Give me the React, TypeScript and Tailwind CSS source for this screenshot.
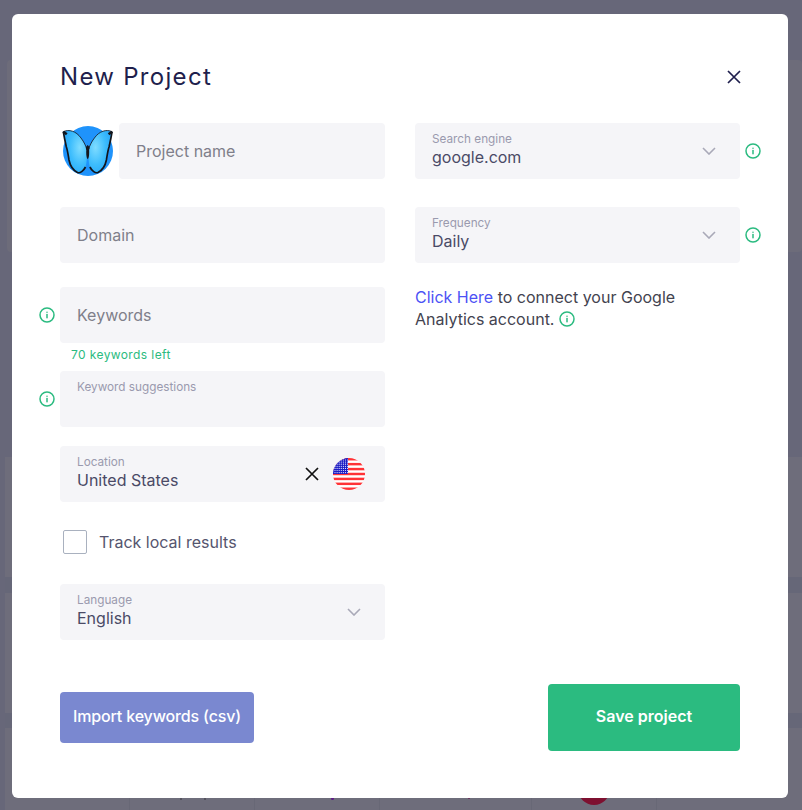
function InfoIcon() {
  return (
    <svg width="16" height="16" viewBox="0 0 16 16" fill="none" stroke="#2bbb80" strokeWidth="1.5" strokeLinecap="round">
      <circle cx="8" cy="8" r="7" />
      <path d="M8 7.6v3.2" />
      <path d="M8 5.2v.1" />
    </svg>
  );
}

function Chevron() {
  return (
    <svg width="14" height="8" viewBox="0 0 14 8" fill="none" stroke="#a9a9b8" strokeWidth="1.6">
      <path d="M1 1l6 6 6-6" />
    </svg>
  );
}

function Cross({ color, size }: { color: string; size: number }) {
  return (
    <svg width={size} height={size} viewBox="0 0 14 14" fill="none" stroke={color} strokeWidth="1.7">
      <path d="M1 1l12 12M13 1L1 13" />
    </svg>
  );
}

// blue morpho logo
const wing =
  "M3.3 8.7C9 6 16 8 21 15C24 19 26 23 27 27C27 34 27 39 25.5 44C23.5 48 20 50.5 17.5 49.5C12.5 47 10 42 9 37C8 31 7.5 27 6.3 23.7C5 18 4 13 3.3 8.7Z";
const outerEdge = "M3.3 8.7C4 13 5 18 6.3 23.7C7.5 27 8 31 9 37C10 42 12.5 47 17.5 49.5C20 50.5 23.5 48 25.5 44";
const upperEdge = "M3.3 8.7C9 6 16 8 21 15C24 19 26 23 27 27";

function WingHalf() {
  return (
    <>
      <path d={wing} fill="url(#wingFill)" />
      <path d={outerEdge} fill="none" stroke="#12161d" strokeWidth="1.7" />
      <path d={upperEdge} fill="none" stroke="#1a2230" strokeWidth="0.9" />
      <path d="M3.3 8.7l3.5 2.6" fill="none" stroke="#12161d" strokeWidth="2.6" />
    </>
  );
}

function Butterfly() {
  return (
    <svg width="56" height="56" viewBox="0 0 56 56" className="shrink-0">
      <defs>
        <radialGradient id="wingFill" cx="70%" cy="40%" r="75%">
          <stop offset="0%" stopColor="#7fdcff" />
          <stop offset="55%" stopColor="#3dbdfd" />
          <stop offset="100%" stopColor="#25a5f8" />
        </radialGradient>
      </defs>
      <circle cx="28" cy="28" r="25" fill="#1f93fb" />
      <WingHalf />
      <g transform="translate(55.4) scale(-1 1)">
        <WingHalf />
      </g>
      <ellipse cx="27.7" cy="29" rx="1.5" ry="7" fill="#15171c" />
      <circle cx="27.7" cy="25" r="1.9" fill="#15171c" />
    </svg>
  );
}

function UsFlag() {
  const stripes = [0, 2, 4, 6, 8, 10, 12];
  const dots = [];
  for (let r = 0; r < 7; r++) {
    for (let c = 0; c < 7; c++) {
      dots.push(<circle key={`${r}-${c}`} cx={2 + c * 2.1} cy={2 + r * 2.1} r="0.6" fill="#e4e6ff" />);
    }
  }
  return (
    <svg width="32" height="32" viewBox="0 0 32 32" className="shrink-0">
      <defs>
        <clipPath id="flagClip">
          <circle cx="16" cy="16" r="16" />
        </clipPath>
      </defs>
      <g clipPath="url(#flagClip)">
        <rect width="32" height="32" fill="#fff" />
        {stripes.map((s) => (
          <rect key={s} y={s * 2.46} width="32" height="2.46" fill="#ff3236" />
        ))}
        <rect width="15" height="16" fill="#1c1cc4" />
        {dots}
      </g>
    </svg>
  );
}

function Field({ children, className = "" }: { children: React.ReactNode; className?: string }) {
  return <div className={`relative h-14 rounded bg-[#f5f5f8] ${className}`}>{children}</div>;
}

function Placeholder({ text }: { text: string }) {
  return <div className="flex h-full items-center px-[17px] text-base text-[#7f7f8a]">{text}</div>;
}

function LabelledValue({ label, value }: { label: string; value: string }) {
  return (
    <div className="pl-[17px] pt-[9px]">
      <div className="text-[11.75px] leading-[14px] text-[#9a9aae]">{label}</div>
      <div className="text-base leading-[22px] text-[#4a4a66]">{value}</div>
    </div>
  );
}

function SelectField({ label, value }: { label: string; value: string }) {
  return (
    <Field>
      <LabelledValue label={label} value={value} />
      <div className="absolute right-6 top-6 flex">
        <Chevron />
      </div>
    </Field>
  );
}

// dimmed page behind the dialog
function Backdrop() {
  return (
    <div className="h-full w-full bg-[#676779] pt-[60px]">
      <div className="ml-[7px] h-[192px] rounded bg-[#6d6c7a]" />
      <div className="ml-[5px] mt-[205px] flex flex-col bg-[#6e6d7b]">
        <div className="h-[120px]" />
        <div className="h-4 bg-[#666778]" />
        <div className="h-[120px]" />
        <div className="h-[15px] bg-[#666778]" />
        <div className="flex h-[82px]">
          <div className="w-[125px] border-r border-[#686876]" />
          <div className="flex w-[125px] items-start gap-[22px] border-r border-[#686876] pl-[50px] pt-[70px]">
            <div className="h-[2px] w-[2px] bg-[#55535f]" />
            <div className="h-[2px] w-[2px] bg-[#55535f]" />
          </div>
          <div className="w-[125px] border-r border-[#686876] pl-[76px] pt-[69px]">
            <div className="h-[3px] w-[3px] rounded-full bg-[#5d1a86]" />
          </div>
          <div className="w-[152px] border-r border-[#686876] pl-[88px] pt-[69px]">
            <div className="h-[2px] w-[2px] bg-[#6b3560]" />
          </div>
          <div className="flex w-[125px] justify-center border-r border-[#686876] pt-[45px]">
            <div className="h-8 w-8 rounded-full bg-[#7e1030]" />
          </div>
        </div>
      </div>
    </div>
  );
}

export default function App() {
  return (
    <div className="relative h-[810px] w-[802px] overflow-hidden" style={{ fontFamily: "Inter, 'Liberation Sans', sans-serif" }}>
      <Backdrop />
      <div className="absolute left-3 top-[14px] flex h-[784px] w-[776px] flex-col rounded-md bg-white px-12">
        <div className="flex items-center justify-between pt-[47px]">
          <h1 className="text-2xl font-normal leading-8 tracking-[1.3px] text-[#1f1f4d]">New Project</h1>
          <button className="mr-[-1px] flex">
            <Cross color="#1f1f4d" size={14} />
          </button>
        </div>

        <div className="mt-[30px] flex gap-[30px]">
          <div className="flex w-[325px] flex-col">
            <div className="flex items-center gap-[3px]">
              <Butterfly />
              <Field className="grow">
                <Placeholder text="Project name" />
              </Field>
            </div>
            <Field className="mt-7">
              <Placeholder text="Domain" />
            </Field>
            <Field className="mt-6">
              <Placeholder text="Keywords" />
              <div className="absolute -left-[21px] top-5">
                <InfoIcon />
              </div>
            </Field>
            <div className="pl-[11px] pt-[5px] text-xs leading-[14px] tracking-[0.4px] text-[#2bbb80]">70 keywords left</div>
            <Field className="mt-[9px]">
              <div className="pl-[17px] pt-[9px] text-[11.75px] leading-[14px] text-[#9a9aae]">Keyword suggestions</div>
              <div className="absolute -left-[21px] top-5">
                <InfoIcon />
              </div>
            </Field>
            <Field className="mt-[19px] flex items-start justify-between">
              <LabelledValue label="Location" value="United States" />
              <div className="flex items-center gap-[14px] pr-5 pt-3">
                <Cross color="#111111" size={14} />
                <UsFlag />
              </div>
            </Field>
            <label className="mt-7 flex items-center gap-3 pl-[3px]">
              <span className="h-6 w-6 rounded-[2px] border border-[#a9b1bf] bg-white" />
              <span className="text-base text-[#55556e]">Track local results</span>
            </label>
            <div className="mt-[30px]">
              <SelectField label="Language" value="English" />
            </div>
          </div>

          <div className="flex w-[325px] flex-col">
            <div className="relative">
              <SelectField label="Search engine" value="google.com" />
              <div className="absolute -right-[21px] top-5">
                <InfoIcon />
              </div>
            </div>
            <div className="relative mt-7">
              <SelectField label="Frequency" value="Daily" />
              <div className="absolute -right-[21px] top-5">
                <InfoIcon />
              </div>
            </div>
            <p className="mt-[23px] text-base leading-[22px] text-[#43434f]">
              <a className="text-[#4d52f5]">Click Here</a> to connect your Google Analytics account.{" "}
              <span className="inline-block align-[-2px]">
                <InfoIcon />
              </span>
            </p>
          </div>
        </div>

        <div className="mt-11 flex items-center justify-between">
          <button className="h-[51px] w-[194px] rounded bg-[#7a88d0] pb-[3px] text-base font-medium tracking-[-0.15px] text-white">Import keywords (csv)</button>
          <button className="h-[67px] w-48 rounded bg-[#2bbb80] pb-[3px] text-base font-semibold text-white">Save project</button>
        </div>
      </div>
    </div>
  );
}
